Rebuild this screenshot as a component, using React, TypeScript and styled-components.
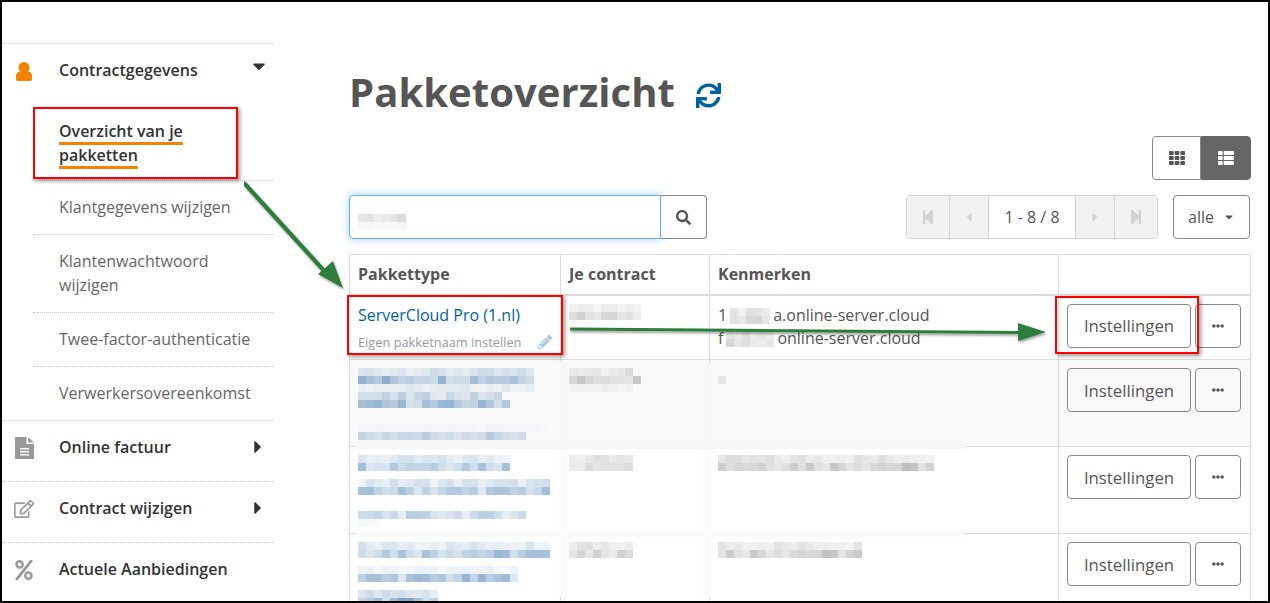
import styled, { createGlobalStyle } from 'styled-components';
import {
  FaCaretDown,
  FaCaretLeft,
  FaCaretRight,
  FaEllipsisH,
  FaPencilAlt,
  FaPercent,
  FaRegEdit,
  FaSearch,
  FaStepBackward,
  FaStepForward,
  FaSync,
  FaTh,
  FaThList,
} from 'react-icons/fa';

const GlobalStyle = createGlobalStyle`
  html, body { margin: 0; padding: 0; background: #fff; }
  body { font-family: "Open Sans", "Liberation Sans", sans-serif; font-size: 16px; color: #555; }
  * { box-sizing: border-box; }
`;

const Frame = styled.div`
  position: relative;
  width: 1270px;
  height: 603px;
  border: 2px solid #000;
  overflow: hidden;
  display: flex;
  background: #fff;
`;

const Sidebar = styled.nav`
  flex: 0 0 271px;
  padding-top: 41px;
`;

const NavItem = styled.div`
  display: flex;
  align-items: center;
  height: 61px;
  padding: 0 5px 8px 0;
  border-top: 1px dotted #c8c8c8;
  font-weight: 600;
  color: #333;
  line-height: 24px;
`;

const NavIcon = styled.span<{ $color?: string; $size?: number }>`
  flex: 0 0 44px;
  margin-right: 13px;
  padding-top: 2px;
  display: flex;
  justify-content: center;
  color: ${(p) => p.$color ?? '#999'};
  font-size: ${(p) => p.$size ?? 20}px;
`;

const NavLabel = styled.span`
  flex: 1;
`;

const NavCaret = styled.span<{ $open?: boolean }>`
  display: flex;
  font-size: 20px;
  color: #333;
  margin: ${(p) => (p.$open ? '-8px -1px 0 0' : '0')};
`;

const SubList = styled.div`
  margin: -1px 0 -1px 31px;
`;

const SubItem = styled.div<{ $active?: boolean }>`
  padding: ${(p) => (p.$active ? '16px 20px 14px 26px' : '14px 20px 16px 26px')};
  line-height: 24px;
  font-weight: ${(p) => (p.$active ? 600 : 400)};
  color: ${(p) => (p.$active ? '#333' : '#666')};
  border-top: ${(p) => (p.$active ? '0' : '1px dotted #c8c8c8')};
  margin-top: ${(p) => (p.$active ? 0 : -1)}px;
`;

const ActiveText = styled.span`
  text-decoration: underline solid #f58300 3px;
  text-underline-offset: 5px;
  text-decoration-skip-ink: none;
`;

const Main = styled.main`
  flex: 1;
  padding: 65px 18px 0 76px;
`;

const TitleRow = styled.div`
  display: flex;
  align-items: center;
  gap: 21px;
  height: 50px;
`;

const Title = styled.h1`
  margin: 0;
  font-size: 40px;
  font-weight: 700;
  line-height: 50px;
  letter-spacing: 0.05px;
  color: #555;
`;

const Refresh = styled.span`
  display: flex;
  color: #0060a0;
  font-size: 25px;
  margin-top: 6px;
`;

const ViewBar = styled.div`
  display: flex;
  justify-content: flex-end;
  margin-top: 19px;
`;

const ViewButton = styled.button<{ $active?: boolean }>`
  width: ${(p) => (p.$active ? 50 : 49)}px;
  height: 44px;
  display: flex;
  align-items: center;
  justify-content: center;
  font-size: 16px;
  padding: 0;
  background: ${(p) => (p.$active ? '#666' : '#fff')};
  color: ${(p) => (p.$active ? '#fff' : '#555')};
  border: 1px solid ${(p) => (p.$active ? '#666' : '#888')};
  border-radius: ${(p) => (p.$active ? '0 4px 4px 0' : '4px 0 0 4px')};
`;

const Controls = styled.div`
  display: flex;
  margin-top: 15px;
  height: 44px;
`;

const SearchInput = styled.div`
  width: 312px;
  display: flex;
  align-items: center;
  padding: 10px 0 0 8px;
  border: 1px solid #66afe9;
  border-radius: 4px 0 0 4px;
  box-shadow: 0 0 8px rgba(102, 175, 233, 0.6);
`;

const SearchButton = styled.button`
  width: 46px;
  display: flex;
  align-items: center;
  justify-content: center;
  padding: 0;
  background: #fff;
  color: #555;
  font-size: 15px;
  border: 1px solid #888;
  border-left: 0;
  border-radius: 0 4px 4px 0;
`;

const Pager = styled.div`
  display: flex;
  margin-left: 199px;
  border: 1px solid #d4d4d4;
  border-radius: 4px;
  overflow: hidden;
`;

const PagerButton = styled.span<{ $w: number; $small?: boolean }>`
  width: ${(p) => p.$w}px;
  display: flex;
  align-items: center;
  justify-content: center;
  background: #f2f2f2;
  color: #d2d2d2;
  font-size: ${(p) => (p.$small ? 14 : 16)}px;
  & + & { border-left: 1px solid #d4d4d4; }
`;

const PagerLabel = styled.span`
  width: 88px;
  display: flex;
  align-items: center;
  justify-content: center;
  background: #fff;
  border-left: 1px solid #d4d4d4;
  border-right: 1px solid #d4d4d4;
  color: #555;
`;

const PageSize = styled.button`
  width: 77px;
  margin-left: 15px;
  display: flex;
  align-items: center;
  justify-content: center;
  gap: 9px;
  padding: 0;
  background: #fff;
  border: 1px solid #888;
  border-radius: 4px;
  font: inherit;
  color: #555;
  & svg { font-size: 12px; }
`;

const Table = styled.table`
  width: 901px;
  margin-top: 15px;
  border-collapse: collapse;
  table-layout: fixed;
`;

const Th = styled.th<{ $w: number }>`
  width: ${(p) => p.$w}px;
  height: 40px;
  padding: 0 8px;
  text-align: left;
  font-weight: 700;
  color: #555;
  border: 1px solid #ddd;
  border-bottom-width: 2px;
`;

const Tr = styled.tr<{ $h: number; $odd?: boolean }>`
  height: ${(p) => p.$h}px;
  background: ${(p) => (p.$odd ? '#f9f9f9' : '#fff')};
`;

const Td = styled.td`
  padding: 8px 8px 0;
  vertical-align: top;
  border: 1px solid #ddd;
  line-height: 23px;
`;

const PackageLink = styled.a`
  display: block;
  color: #00639c;
  line-height: 22px;
`;

const PackageNote = styled.div`
  display: flex;
  align-items: center;
  justify-content: space-between;
  margin-top: 4px;
  font-size: 12.8px;
  line-height: 24px;
  color: #999;
  & svg { color: #a9c9e3; font-size: 14px; }
`;

const Actions = styled.div`
  display: flex;
  gap: 4px;
`;

const ActionButton = styled.button<{ $w: number }>`
  width: ${(p) => p.$w}px;
  height: 44px;
  display: flex;
  align-items: center;
  justify-content: center;
  padding: 0;
  background: transparent;
  border: 1px solid #888;
  border-radius: 4px;
  font: inherit;
  font-size: 16.8px;
  color: #555;
`;

const Annotation = styled.div<{ $x: number; $y: number; $w: number; $h: number }>`
  position: absolute;
  left: ${(p) => p.$x - 2}px;
  top: ${(p) => p.$y - 2}px;
  width: ${(p) => p.$w}px;
  height: ${(p) => p.$h}px;
  border: 2.5px solid #f00;
  box-shadow: 2px 2px 4px rgba(0, 0, 0, 0.4);
`;

// smeared table lines left over from the censoring in the screenshot
const Smear = styled.div<{ $x: number; $y: number; $w: number; $h: number; $tone?: string }>`
  position: absolute;
  left: ${(p) => p.$x - 2}px;
  top: ${(p) => p.$y - 2}px;
  width: ${(p) => p.$w}px;
  height: ${(p) => p.$h}px;
  background: ${(p) => p.$tone ?? '#fbfbfb'};
`;

const ArrowLayer = styled.svg`
  position: absolute;
  left: -2px;
  top: -2px;
  pointer-events: none;
`;

const PixelBox = styled.svg`
  display: block;
`;

const InlinePixels = styled.svg`
  display: inline-block;
  vertical-align: -3px;
  margin: 0 3px;
`;

// rows of the pixelated (censored) parts of the screenshot: [cells, strength]
type PixelRow = [number, number];

const shade = (seed: number) => {
  const v = Math.sin(seed * 12.9898) * 43758.5453;
  return v - Math.floor(v);
};

function pixelRects(rows: PixelRow[], color: string, seed: number) {
  return rows.flatMap(([count, strength], r) =>
    Array.from({ length: count }, (_, c) => (
      <rect
        key={`${r}-${c}`}
        x={c * 8}
        y={r * 8}
        width={8}
        height={8}
        fill={color}
        opacity={strength * (0.45 + 0.95 * shade(seed + r * 31 + c))}
      />
    )),
  );
}

function Pixels({ rows, color = '#8c8c8c', seed = 1 }: { rows: PixelRow[]; color?: string; seed?: number }) {
  const w = Math.max(...rows.map((r) => r[0])) * 8;
  return (
    <PixelBox width={w} height={rows.length * 8}>
      {pixelRects(rows, color, seed)}
    </PixelBox>
  );
}

function Masked({ cells, seed }: { cells: number; seed: number }) {
  return (
    <InlinePixels width={cells * 8} height={16}>
      {pixelRects([[cells, 0.2], [cells, 0.3]], '#8c8c8c', seed)}
    </InlinePixels>
  );
}

function UserIcon() {
  return (
    <svg width="16" height="19" viewBox="0 0 16 19" fill="currentColor">
      <circle cx="8" cy="5.5" r="5.5" />
      <path d="M0 17V14C0 11 2 9.5 4.5 9.5H11.5C14 9.5 16 11 16 14V17Q16 19 14 19H2Q0 19 0 17Z" />
    </svg>
  );
}

function FileIcon() {
  return (
    <svg width="19" height="22" viewBox="0 0 19 22">
      <path d="M0 0H11.5V7H19V22H0Z" fill="#999" />
      <path d="M13 0L19 5.5H13Z" fill="#999" />
      <path d="M5 11h9v1.4H5zM5 14h9v1.4H5zM5 17h9v1.4H5z" fill="#fff" />
    </svg>
  );
}

const BLUE = '#5f8fbc';

function RowActions() {
  return (
    <Td>
      <Actions>
        <ActionButton $w={124}>Instellingen</ActionButton>
        <ActionButton $w={46}><FaEllipsisH size={12} /></ActionButton>
      </Actions>
    </Td>
  );
}

export default function App() {
  return (
    <>
      <GlobalStyle />
      <Frame>
        <Sidebar>
          <NavItem>
            <NavIcon $color="#f58300"><UserIcon /></NavIcon>
            <NavLabel>Contractgegevens</NavLabel>
            <NavCaret $open><FaCaretDown /></NavCaret>
          </NavItem>
          <SubList>
            <SubItem $active>
              <ActiveText>Overzicht van je</ActiveText>
              <br />
              <ActiveText>pakketten</ActiveText>
            </SubItem>
            <SubItem>Klantgegevens wijzigen</SubItem>
            <SubItem>Klantenwachtwoord wijzigen</SubItem>
            <SubItem>Twee-factor-authenticatie</SubItem>
            <SubItem>Verwerkersovereenkomst</SubItem>
          </SubList>
          <NavItem>
            <NavIcon><FileIcon /></NavIcon>
            <NavLabel>Online factuur</NavLabel>
            <NavCaret><FaCaretRight /></NavCaret>
          </NavItem>
          <NavItem>
            <NavIcon $size={20}><FaRegEdit /></NavIcon>
            <NavLabel>Contract wijzigen</NavLabel>
            <NavCaret><FaCaretRight /></NavCaret>
          </NavItem>
          <NavItem>
            <NavIcon><FaPercent /></NavIcon>
            <NavLabel>Actuele Aanbiedingen</NavLabel>
          </NavItem>
        </Sidebar>

        <Main>
          <TitleRow>
            <Title>Pakketoverzicht</Title>
            <Refresh><FaSync /></Refresh>
          </TitleRow>

          <ViewBar>
            <ViewButton><FaTh /></ViewButton>
            <ViewButton $active><FaThList /></ViewButton>
          </ViewBar>

          <Controls>
            <SearchInput>
              <Pixels rows={[[6, 0.24], [6, 0.06]]} seed={5} />
            </SearchInput>
            <SearchButton><FaSearch /></SearchButton>
            <Pager>
              <PagerButton $w={42}><FaStepBackward /></PagerButton>
              <PagerButton $w={39} $small><FaCaretLeft /></PagerButton>
              <PagerLabel>1 - 8 / 8</PagerLabel>
              <PagerButton $w={38} $small><FaCaretRight /></PagerButton>
              <PagerButton $w={43}><FaStepForward /></PagerButton>
            </Pager>
            <PageSize>alle <FaCaretDown /></PageSize>
          </Controls>

          <Table>
            <thead>
              <tr>
                <Th $w={211}>Pakkettype</Th>
                <Th $w={149}>Je contract</Th>
                <Th $w={349}>Kenmerken</Th>
                <Th $w={192} />
              </tr>
            </thead>
            <tbody>
              <Tr $h={65}>
                <Td>
                  <PackageLink>ServerCloud Pro (1.nl)</PackageLink>
                  <PackageNote>
                    Eigen pakketnaam instellen
                    <FaPencilAlt />
                  </PackageNote>
                </Td>
                <Td>
                  <Pixels rows={[[9, 0.12], [9, 0.3]]} seed={9} />
                </Td>
                <Td>
                  1<Masked cells={5} seed={11} />a.online-server.cloud
                  <br />
                  f<Masked cells={6} seed={14} />online-server.cloud
                </Td>
                <RowActions />
              </Tr>
              <Tr $h={87} $odd>
                <Td>
                  <Pixels
                    color={BLUE}
                    seed={21}
                    rows={[[22, 0.2], [22, 0.55], [22, 0.12], [18, 0.28], [19, 0.48], [0, 0], [0, 0], [24, 0.03], [21, 0.34]]}
                  />
                </Td>
                <Td>
                  <Pixels rows={[[8, 0.2], [9, 0.36], [8, 0.08]]} seed={23} />
                </Td>
                <Td>
                  <Pixels rows={[[0, 0], [1, 0.14]]} seed={24} />
                </Td>
                <RowActions />
              </Tr>
              <Tr $h={87}>
                <Td>
                  <Pixels
                    color={BLUE}
                    seed={31}
                    rows={[[19, 0.2], [19, 0.48], [0, 0], [24, 0.22], [24, 0.42], [0, 0], [0, 0], [21, 0.32], [3, 0.08]]}
                  />
                </Td>
                <Td>
                  <Pixels rows={[[8, 0.2], [8, 0.32]]} seed={33} />
                </Td>
                <Td>
                  <Pixels rows={[[27, 0.22], [27, 0.42]]} seed={35} />
                </Td>
                <RowActions />
              </Tr>
              <Tr $h={87}>
                <Td>
                  <Pixels
                    color={BLUE}
                    seed={41}
                    rows={[[24, 0.2], [24, 0.48], [0, 0], [20, 0.1], [20, 0.48], [0, 0], [10, 0.25], [10, 0.6]]}
                  />
                </Td>
                <Td>
                  <Pixels rows={[[8, 0.22], [8, 0.36]]} seed={43} />
                </Td>
                <Td>
                  <Pixels rows={[[18, 0.2], [18, 0.4]]} seed={45} />
                </Td>
                <RowActions />
              </Tr>
            </tbody>
          </Table>
        </Main>

        <Smear $x={356} $y={441} $w={609} $h={8} $tone="#f6f6f6" />
        <Smear $x={356} $y={529} $w={609} $h={8} />
        <Smear $x={559} $y={361} $w={8} $h={80} $tone="#f7f7f7" />
        <Smear $x={559} $y={449} $w={8} $h={80} />
        <Smear $x={559} $y={537} $w={8} $h={60} />
        <Smear $x={703} $y={364} $w={8} $h={77} $tone="#f7f7f7" />
        <Smear $x={703} $y={449} $w={8} $h={80} />
        <Smear $x={703} $y={537} $w={8} $h={60} />

        <Annotation $x={33} $y={107} $w={205} $h={72} />
        <Annotation $x={347} $y={295} $w={216} $h={60} />
        <Annotation $x={1055} $y={296} $w={144} $h={58} />

        <ArrowLayer width={1270} height={603}>
          <defs>
            <filter id="arrowShadow" x="-10%" y="-10%" width="120%" height="130%">
              <feDropShadow dx="1" dy="2" stdDeviation="1.2" floodColor="#000" floodOpacity="0.35" />
            </filter>
          </defs>
          <g filter="url(#arrowShadow)" fill="#2e7d3e" stroke="none">
            <path d="M244 181 L247 183 L329 273 L326 276 L244 186 Z" />
            <path d="M343 288 L318 274 L333 261 Z" />
            <path d="M570 327.5 L1020 331 L1020 334 L570 330.5 Z" />
            <path d="M1046 332 L1018 323 L1018 341 Z" />
          </g>
        </ArrowLayer>
      </Frame>
    </>
  );
}
